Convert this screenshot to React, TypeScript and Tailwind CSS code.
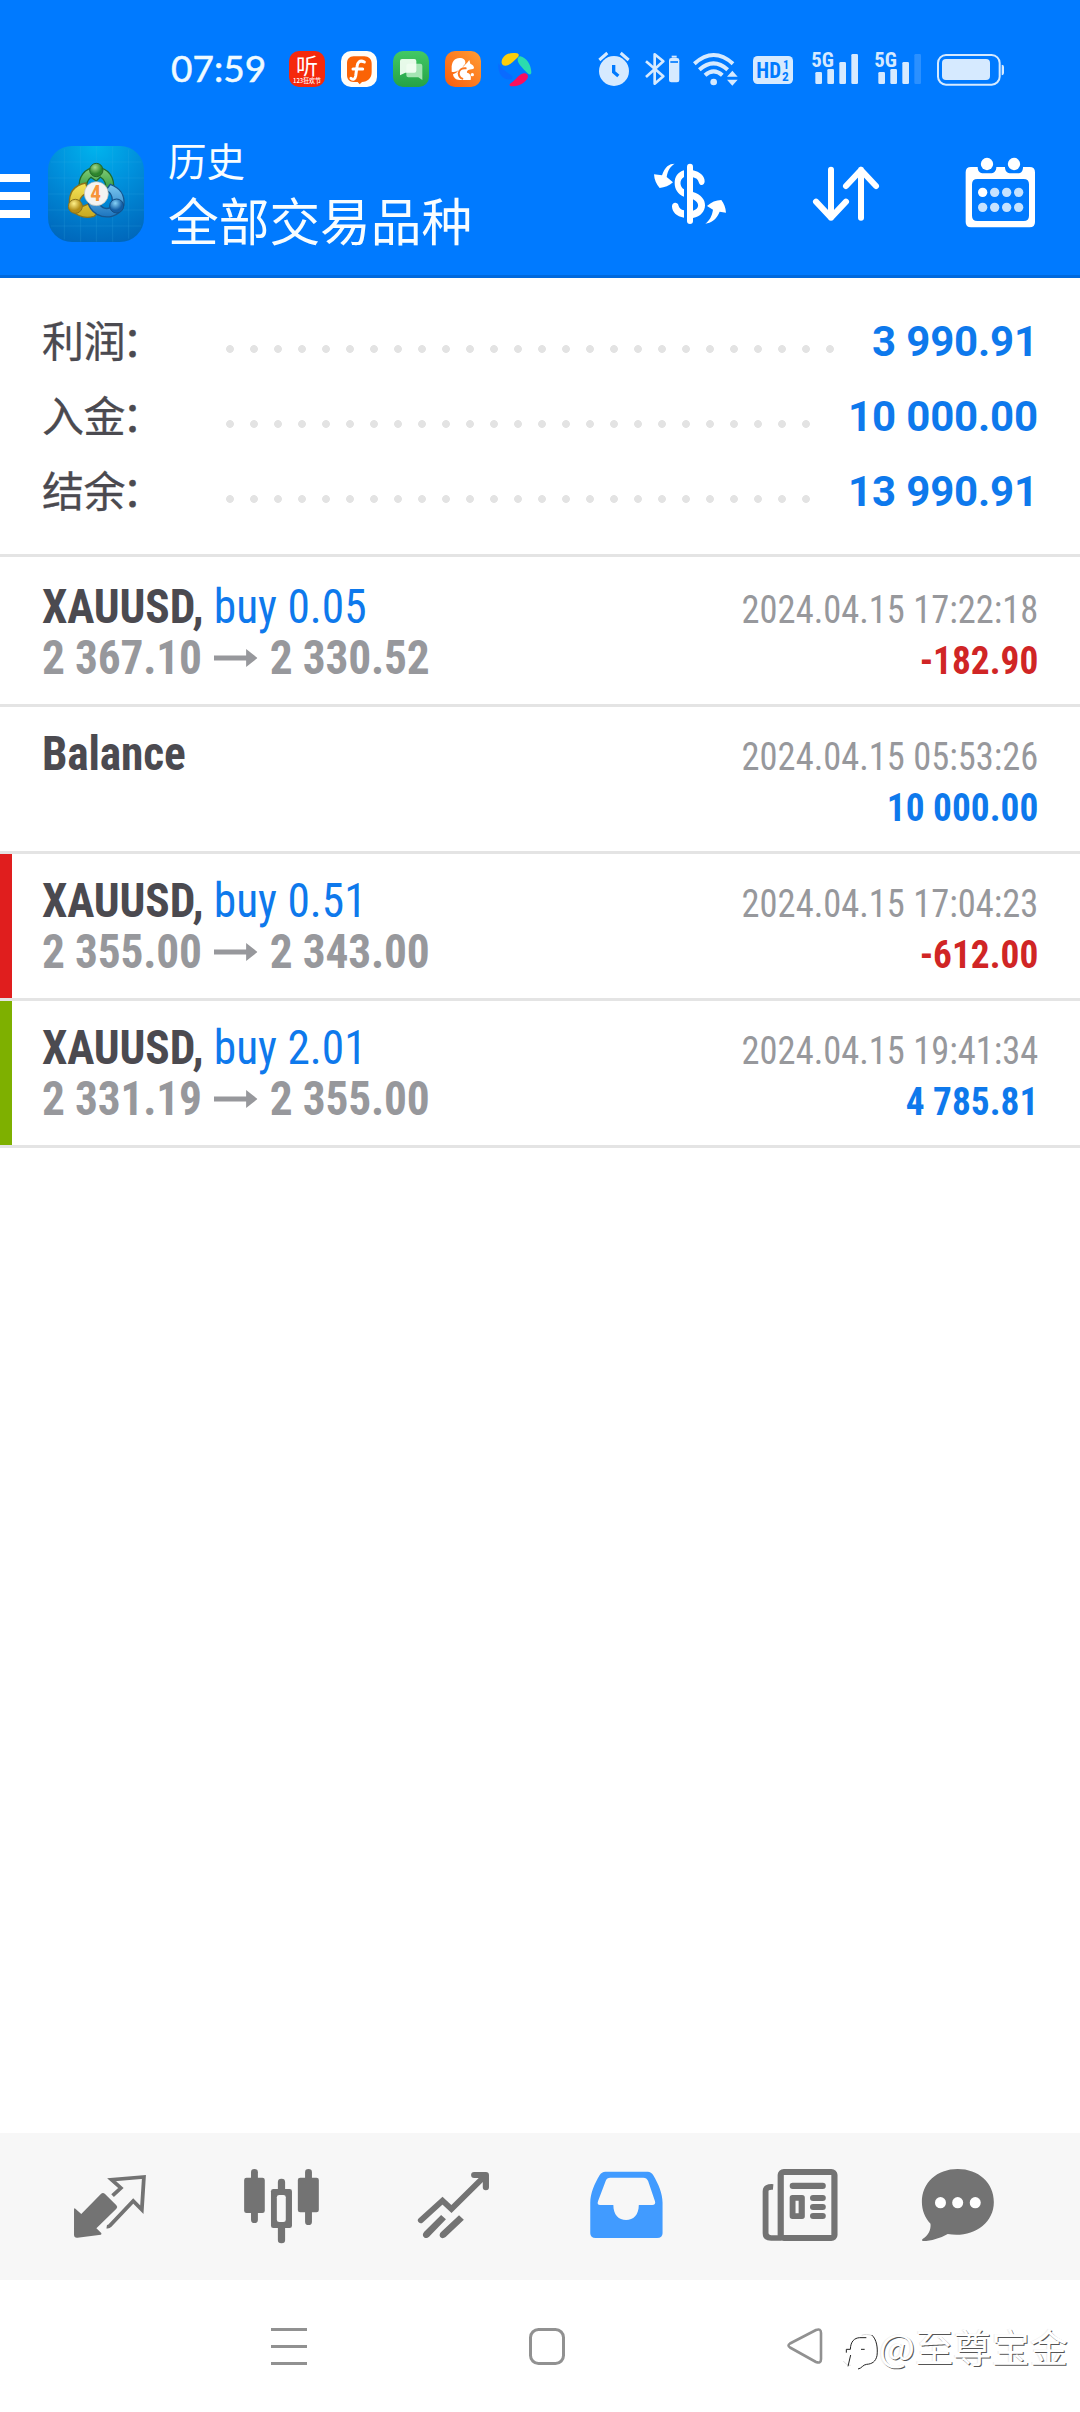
import type { ReactNode } from "react";

const SANS = "font-['Roboto','Noto_Sans_CJK_SC',sans-serif]";
const COND = "font-['Roboto_Condensed','Roboto',sans-serif]";
const CJK = "font-['Noto_Sans_CJK_SC',sans-serif]";

/* ---------- status bar ---------- */

function NotificationIcons() {
  return (
    <div className="ml-[22px] flex gap-4">
      <svg className="size-9" viewBox="0 0 108 108">
        <rect width="108" height="108" rx="30" fill="#f5290c" />
        <text x="54" y="70" fontSize="66" fill="#fff" textAnchor="middle" fontFamily="Noto Sans CJK SC" fontWeight="400">听</text>
        <text x="54" y="96" fontSize="20" fill="#fff" textAnchor="middle" fontFamily="Noto Sans CJK SC" fontWeight="500" textLength="84" lengthAdjust="spacingAndGlyphs">123狂欢节</text>
      </svg>
      <svg className="size-9" viewBox="0 0 108 108">
        <rect width="108" height="108" rx="30" fill="#fffdf8" />
        <path d="M38 16h32c13 0 22 9 22 22v25c0 19-12 29-29 30l-7 7-6-7H38c-13 0-20-9-20-21V38c0-13 7-22 20-22z" fill="#fb6305" />
        <path d="M70 33c-14-7-21 1-22 14l-4 28c-2 11-8 12-14 7M36 54h29" fill="none" stroke="#fff" strokeWidth="9" strokeLinecap="round" />
      </svg>
      <svg className="size-9" viewBox="0 0 108 108">
        <defs>
          <linearGradient id="chat" x2="0" y2="1"><stop stopColor="#42c964" /><stop offset="1" stopColor="#25a247" /></linearGradient>
        </defs>
        <rect width="108" height="108" rx="30" fill="url(#chat)" />
        <path d="M46 38h36q6 0 6 6v43l-12-8H46q-6 0-6-6V44q0-6 6-6z" fill="#a5e5b4" />
        <path d="M27 24h37q6 0 6 6v29q0 6-6 6H37l-16 8V30q0-6 6-6z" fill="#f4fff4" opacity=".93" />
      </svg>
      <svg className="size-9" viewBox="0 0 108 108">
        <defs>
          <linearGradient id="uc" x1="1" x2="0" y2="1"><stop stopColor="#ff9d35" /><stop offset="1" stopColor="#fb5c0c" /></linearGradient>
        </defs>
        <rect width="108" height="108" rx="30" fill="url(#uc)" />
        <path d="M20 53c-1-20 9-32 24-32 11 0 18 6 17 14-1 7-7 8-8 13 4-2 8-8 13-12l7-9 3 11c8 3 12 9 11 14-4 4-10 3-15 4-5 2-7 5-6 9 9 2 14 9 11 22H44c-12 0-19-8-20-17 7-2 14-6 16-12-6 5-13 6-20 4z" fill="#fff" />
        <path d="M62 52c-12-1-20 6-21 15 1 9 5 14 11 16" fill="none" stroke="#fb7620" strokeWidth="6" strokeLinecap="round" />
        <circle cx="82" cy="71" r="5" fill="#fff" />
      </svg>
      <svg className="size-9" viewBox="0 0 108 108">
        <path d="M14 36C12 20 30 1 60 7c7 2 7 8 1 13C48 32 35 45 25 44c-7 0-10-3-11-8z" fill="#fbce0c" />
        <path d="M70 16c18 4 32 24 33 48 0 8-7 8-12 2C80 54 63 40 62 27c0-7 3-11 8-11z" fill="#2bdcae" />
        <path d="M92 81c-7 15-29 26-48 25-8-1-8-6-2-10 15-9 25-28 38-29 10 0 15 6 12 14z" fill="#fb0e5c" />
        <path d="M4 37c-2 30 12 50 37 48 7-3 7-9 2-12C27 63 13 52 4 37z" fill="#0a6bff" />
      </svg>
    </div>
  );
}

function Signal({ weak = false }: { weak?: boolean }) {
  return (
    <svg className="h-9 w-[46px] overflow-visible" viewBox="0 0 138 108" fill="#d6eaff">
      <text x="-2" y="47" fontSize="58" fontFamily="Roboto Condensed" fontWeight="700" textLength="68" lengthAdjust="spacingAndGlyphs">5G</text>
      <rect x="10" y="63" width="20" height="36" rx="4" />
      <rect x="46" y="54" width="20" height="45" rx="4" />
      <rect x="82" y="33" width="20" height="66" rx="4" />
      <rect x="118" y="9" width="20" height="90" rx="4" opacity={weak ? 0.2 : 1} />
    </svg>
  );
}

function StatusBar() {
  return (
    <div className="flex h-[138px] items-start pt-[51px] pl-[171px]">
      <span className="-mt-[2px] w-[96px] font-['Lato',sans-serif] text-[37px] leading-[37px] whitespace-nowrap text-[#effaff] [-webkit-text-stroke:0.5px_#effaff]">07:59</span>
      <NotificationIcons />
      <svg className="ml-[65px] h-9 w-8" viewBox="0 0 96 108">
        <circle cx="48" cy="60" r="45" fill="#d6eaff" />
        <path d="M4 27 28 6M68 6l24 21" stroke="#d6eaff" strokeWidth="9" strokeLinecap="butt" />
        <path d="M47 42v21l14 12" fill="none" stroke="#007aff" strokeWidth="10" />
      </svg>
      <svg className="ml-[14px] h-9 w-[36px]" viewBox="0 0 108 108" fill="none" stroke="#d6eaff" strokeWidth="8">
        <path d="m6 31 52 45-26 22V10l26 21L6 78" strokeLinejoin="round" />
        <rect x="75" y="21" width="31" height="73" rx="7" fill="#d6eaff" stroke="none" />
        <path d="M83 17h15" strokeWidth="6" /><path d="M79 33h23" stroke="#007aff" strokeWidth="5" />
      </svg>
      <svg className="ml-[13px] h-9 w-[45px]" viewBox="0 0 135 108" fill="none" stroke="#d6eaff" strokeWidth="12">
        <path d="M4 38q58-52 116 0M19 56q43-38 85 0M36 73q26-24 52 0" />
        <circle cx="62" cy="93" r="10" fill="#d6eaff" stroke="none" />
        <path d="m118 59 16 18h-32zM118 104l16-18h-32z" fill="#d6eaff" stroke="none" />
      </svg>
      <svg className="ml-[15px] h-9 w-10" viewBox="0 0 120 108">
        <rect y="15" width="120" height="84" rx="14" fill="#d6eaff" />
        <g fill="#007aff" fontFamily="Roboto Condensed" fontWeight="700">
          <text x="10" y="81" fontSize="66" textLength="74" lengthAdjust="spacingAndGlyphs">HD</text>
          <text x="90" y="53" fontSize="36">1</text>
          <text x="87" y="89" fontSize="40">2</text>
        </g>
      </svg>
      <div className="ml-[19px]"><Signal /></div>
      <div className="ml-[17px]"><Signal weak /></div>
      <svg className="ml-[16px] h-9 w-[67px]" viewBox="0 0 201 108">
        <rect x="3" y="12" width="185" height="89" rx="24" fill="none" stroke="#d6eaff" strokeWidth="6" />
        <rect x="15" y="24" width="144" height="63" rx="12" fill="#d6eaff" />
        <path d="M194 41q7 0 7 7v16q0 9-7 9z" fill="#d6eaff" />
      </svg>
    </div>
  );
}

/* ---------- app header ---------- */

function AppLogo() {
  return (
    <svg className="ml-[18px] size-24" viewBox="144 78 288 288">
      <defs>
        <radialGradient id="sky" cx=".5" cy="0" r="1.05">
          <stop stopColor="#00b4ee" /><stop offset=".45" stopColor="#008fdb" /><stop offset="1" stopColor="#0066ba" />
        </radialGradient>
        <linearGradient id="gr" x2="0" y2="1"><stop stopColor="#86cf78" /><stop offset="1" stopColor="#23923a" /></linearGradient>
        <linearGradient id="ye" x2="0" y2="1"><stop stopColor="#f6e558" /><stop offset="1" stopColor="#c9a81f" /></linearGradient>
        <linearGradient id="bl" x2="0" y2="1"><stop stopColor="#7cc8f0" /><stop offset="1" stopColor="#1b74bf" /></linearGradient>
        <radialGradient id="hg" cx=".4" cy=".3"><stop stopColor="#a4db8c" /><stop offset="1" stopColor="#2c852c" /></radialGradient>
        <radialGradient id="hy" cx=".4" cy=".3"><stop stopColor="#fff189" /><stop offset="1" stopColor="#b38d16" /></radialGradient>
        <radialGradient id="hb" cx=".4" cy=".3"><stop stopColor="#86d2f7" /><stop offset="1" stopColor="#125da4" /></radialGradient>
      </defs>
      <rect x="144" y="78" width="288" height="288" rx="72" fill="url(#sky)" />
      <path d="M193 86v272M242 79v286M289 79v286M338 79v286M386 88v268M152 126h272M145 174h287M145 222h287M145 270h287M153 318h270" stroke="#3bb5e8" strokeOpacity=".18" strokeWidth="3" />
      <path d="M238 205c-4-33 15-62 51-63 36 1 57 30 51 69l-25 8c6-23 0-40-14-48l-12 12-16-11c-11 8-15 22-14 37z" fill="url(#gr)" stroke="#1f6b2c" strokeWidth="4" />
      <path d="M257 189c-32 6-51 26-49 65 11 31 41 44 74 35l18-15-34-22-20 8-8-16c4-14 13-22 27-26z" fill="url(#ye)" stroke="#8b731a" strokeWidth="4" />
      <path d="M331 193c26 9 44 30 41 62-13 35-51 44-81 28-17-10-25-24-27-38l31 2c10 18 21 22 36 16l6-22c0-15-8-25-19-31z" fill="url(#bl)" stroke="#175790" strokeWidth="4" />
      <circle cx="289" cy="150" r="20" fill="url(#hg)" stroke="#27642a" strokeWidth="3" />
      <circle cx="226" cy="259" r="21" fill="url(#hy)" stroke="#8b731a" strokeWidth="3" />
      <circle cx="350" cy="258" r="21" fill="url(#hb)" stroke="#134f87" strokeWidth="3" />
      <circle cx="289" cy="221" r="36" fill="#f4f3f1" stroke="#b9bcb4" strokeWidth="2" />
      <text x="287" y="243" fontSize="64" fontFamily="Roboto Condensed" fontWeight="700" textAnchor="middle" fill="#f7943a">4</text>
    </svg>
  );
}

function Header() {
  return (
    <header className="h-[278px] border-b-[3px] border-[#0069dd] bg-[#007aff] text-[#f8fdff]">
      <StatusBar />
      <div className="flex h-[112px] items-center">
        <div className="flex w-[30px] flex-col gap-[10px] pt-1">
          <i className="h-2 bg-white" />
          <i className="h-2 bg-white" />
          <i className="h-2 bg-white" />
        </div>
        <AppLogo />
        <div className={`ml-[24px] w-[381px] pb-1 whitespace-nowrap ${CJK}`}>
          <div className="text-[38.500px] leading-[54px]">历史</div>
          <div className="text-[50.700px] leading-[66px]">全部交易品种</div>
        </div>
        <svg className="ml-[101px] h-[84px] w-20" viewBox="90 66 240 252" fill="#fff">
          <path d="M164 101c-16 0-30 9-38 35l-24-3c1 16 7 31 17 41 15-1 29-7 40-17l-19-16c3-20 12-33 24-40z" />
          <path d="M256 281c17-2 33-12 43-36l19 3c-1-15-6-28-14-38-16 0-30 6-43 18l18 11c-3 19-10 32-23 42z" />
          <rect x="201" y="101" width="18" height="181" rx="9" />
          <path d="M192 121c-19 6-28 19-28 38s10 34 28 41v-22c-13-8-15-28 0-37zM219 121c20 4 35 17 35 33 0 13-15 16-18 2-2-8-8-12-17-14zM219 186c24 8 36 22 36 40s-13 34-36 38v-22c19-5 22-23 0-34zM192 263c-22-3-36-17-36-34 0-14 18-14 20-1 2 7 7 11 16 13z" />
        </svg>
        <svg className="ml-[76px] h-[84px] w-20" viewBox="558 66 240 252" fill="none" stroke="#fff" strokeWidth="18" strokeLinecap="round" strokeLinejoin="round">
          <path d="M633 119v144M588 215l45 48 45-48M723 263V119M678 168l45-48 45 48" />
        </svg>
        <svg className="ml-[74px] h-[84px] w-20" viewBox="1020 66 240 252" fill="#fff">
          <path fillRule="evenodd" d="M1053 111h20c0 13 7 19 18 19h20c11 0 18-7 18-19h26c0 13 7 19 18 19h20c11 0 16-7 16-19h20q16 0 16 16v149q0 16-16 16h-176q-16 0-16-16V127q0-16 16-16zM1072 147q-16 0-16 16v94q0 16 16 16h139q16 0 16-16v-94q0-16-16-16z" />
          <circle cx="1101" cy="102" r="18.500" /><circle cx="1182" cy="102" r="18.500" />
          <circle cx="1088" cy="187" r="14" />
          <g fill="#c5e2ff">
            <circle cx="1124" cy="187" r="14" /><circle cx="1160" cy="187" r="14" /><circle cx="1196" cy="187" r="14" />
            <circle cx="1088" cy="232" r="14" /><circle cx="1124" cy="232" r="14" /><circle cx="1160" cy="232" r="14" /><circle cx="1196" cy="232" r="14" />
          </g>
        </svg>
      </div>
    </header>
  );
}

/* ---------- summary ---------- */

function SummaryRow({ label, value, long = false }: { label: string; value: string; long?: boolean }) {
  return (
    <div className="flex h-[75px] items-start">
      <span className={`-mt-[3px] w-[176px] text-[42px] leading-[75px] tracking-[-0.5px] whitespace-nowrap text-[#4b4a50] [-webkit-text-stroke:0.3px_#4b4a50] ${CJK}`}>
        {label}
        <span className="-ml-[3px]">：</span>
      </span>
      <i className={`mt-[41px] h-2 bg-[radial-gradient(circle,#e3e3e3_3.5px,transparent_4.3px)] bg-[length:24px_8px] ${long ? "w-[624px]" : "w-[600px]"}`} />
      <span className="ml-auto text-[42px] leading-[75px] font-bold tracking-[-0.15px] whitespace-nowrap text-[#0e79ec]">{value}</span>
    </div>
  );
}

/* ---------- history rows ---------- */

type Deal = {
  symbol: string;
  action?: string;
  from?: string;
  to?: string;
  time: string;
  amount: string;
  loss?: boolean;
  mark?: "red" | "green";
};

const deals: Deal[] = [
  { symbol: "XAUUSD,", action: "buy 0.05", from: "2 367.10", to: "2 330.52", time: "2024.04.15 17:22:18", amount: "-182.90", loss: true },
  { symbol: "Balance", time: "2024.04.15 05:53:26", amount: "10 000.00" },
  { symbol: "XAUUSD,", action: "buy 0.51", from: "2 355.00", to: "2 343.00", time: "2024.04.15 17:04:23", amount: "-612.00", loss: true, mark: "red" },
  { symbol: "XAUUSD,", action: "buy 2.01", from: "2 331.19", to: "2 355.00", time: "2024.04.15 19:41:34", amount: "4 785.81", mark: "green" },
];

function DealRow({ deal }: { deal: Deal }) {
  const edge = deal.mark === "red" ? "bg-[#e01e1e]" : deal.mark === "green" ? "bg-[#7eb000]" : "bg-transparent";
  return (
    <div className={`flex h-[147px] border-b-[3px] border-[#e4e4e4] pr-[42px] whitespace-nowrap ${COND}`}>
      <i className={`w-3 ${edge}`} />
      <div className="ml-[30px] origin-left scale-x-[.945] pt-[21px] text-[48px] leading-[51px]">
        <div>
          <span className="font-bold tracking-[-0.15px] text-[#4b4a50]">{deal.symbol}</span>
          {deal.action && <span className="text-[#0e79ec]"> {deal.action}</span>}
        </div>
        {deal.from && (
          <div className="flex items-center font-bold tracking-[-0.2px] text-[#97989c]">
            <span>{deal.from}</span>
            <svg className="mx-[13px] h-[18px] w-[46px]" viewBox="0 0 46 18" fill="currentColor">
              <path d="M0 6.500h34V0l12 9-12 9v-6.500H0z" />
            </svg>
            <span>{deal.to}</span>
          </div>
        )}
      </div>
      <div className="ml-auto pt-[25px] text-right text-[39px] leading-[51px]">
        <div className="origin-right scale-x-[.935] text-[#97989c]">{deal.time}</div>
        <div className={`origin-right scale-x-[.957] font-bold ${deal.loss ? "text-[#d02525]" : "text-[#0e79ec]"}`}>{deal.amount}</div>
      </div>
    </div>
  );
}

/* ---------- bottom tabs ---------- */

function TabIcon({ box, className = "", children }: { box: string; className?: string; children: ReactNode }) {
  return (
    <svg className={`h-[84px] w-[84px] ${className}`} viewBox={box} preserveAspectRatio="none" fill="#737373">
      {children}
    </svg>
  );
}

function TabBar() {
  return (
    <nav className="flex h-[147px] gap-[88px] bg-[#f7f7f7] pt-[31px] pl-[68px]">
      <TabIcon box="197.5 132 244 252">
        <path d="M215 266q2-2 4 0l17 16 57-60q6-6 12 0l33 34q5 5 0 10l-58 59 14 14q2 3-1 5l-68 9q-10 1-10-9z" />
        <path d="m327 227 24-23-27-25 94-8-6 98-25-26-68 74q-3 4-9 3" fill="none" stroke="#737373" strokeWidth="11" />
      </TabIcon>
      <TabIcon box="697 132 244 252">
        <rect x="729" y="147" width="20" height="162" rx="10" />
        <rect x="709" y="173" width="60" height="106" rx="7" />
        <rect x="886" y="147" width="20" height="168" rx="10" />
        <rect x="865" y="173" width="61" height="104" rx="7" />
        <rect x="807" y="176" width="21" height="60" rx="10" />
        <rect x="807" y="300" width="21" height="70" rx="10" />
        <rect x="787" y="207" width="61" height="117" rx="7" />
        <rect x="804" y="225" width="26" height="81" rx="7" fill="#f7f7f7" />
      </TabIcon>
      <TabIcon box="1196.400 132 244 252">
        <path d="m1222 301 63-59 26 25 97-99" fill="none" stroke="#737373" strokeWidth="17" strokeLinecap="round" />
        <path d="M1377 165h34v37" fill="none" stroke="#737373" strokeWidth="18" strokeLinecap="round" strokeLinejoin="round" />
        <path d="m1281 285 14 13-49 52c-11 11-25-3-14-15zM1333 286l14 13-53 52c-12 10-24-4-13-15z" />
      </TabIcon>
      <TabIcon box="127.800 132 244 252">
        <path fillRule="evenodd" fill="#419bff" d="M190 155h123q10 0 16 11c15 26 27 55 27 82v92q0 14-16 14H162q-16 0-16-14v-92c0-27 12-56 27-82q6-11 17-11zM204 173q-10 0-13 9l-22 60q-5 13 6 13h38c0 30 16 45 37 45s37-15 37-45h39q11 0 8-11l-20-61q-4-10-14-10z" />
      </TabIcon>
      <TabIcon box="633 132 244 252" className="ml-[2px]">
        <g fill="none" stroke="#737373" strokeWidth="18">
          <rect x="699" y="156" width="156" height="198" rx="9" />
          <path d="M677 201q-22-2-22 13v126q0 14 16 14h30" strokeWidth="17" />
        </g>
        <rect x="725" y="188" width="105" height="19" rx="9" />
        <path fillRule="evenodd" d="M733 225h28q8 0 8 8v56q0 8-8 8h-28q-8 0-8-8v-56q0-8 8-8zM742 242v38h9v-38z" />
        <rect x="784" y="225" width="46" height="18" rx="9" /><rect x="784" y="252" width="46" height="18" rx="9" /><rect x="784" y="279" width="46" height="18" rx="9" />
      </TabIcon>
      <TabIcon box="1091.900 132 244 252" className="-ml-[14px]">
        <path d="M1213 147c60 0 105 41 105 99 0 69-67 109-134 96-22 13-48 21-71 21q-7-2-1-7c15-10 24-26 22-45-16-17-25-40-25-65 0-58 44-99 104-99z" />
        <g fill="#fff"><ellipse cx="1163" cy="248" rx="16" ry="17" /><ellipse cx="1213" cy="248" rx="16" ry="17" /><ellipse cx="1264" cy="248" rx="16" ry="17" /></g>
      </TabIcon>
    </nav>
  );
}

function SystemNav() {
  return (
    <div className="flex h-[132px] items-start pt-12 pl-[271px]">
      <svg className="h-[37px] w-9" viewBox="0 0 36 37" stroke="#919191" strokeWidth="3">
        <path d="M0 1.500h36M0 18.500h36M0 35.500h36" />
      </svg>
      <svg className="ml-[222px] h-[37px] w-9" viewBox="0 0 36 37" fill="none" stroke="#919191" strokeWidth="3">
        <rect x="1.500" y="1.500" width="33" height="34" rx="8" />
      </svg>
      <svg className="ml-[222px] h-[37px] w-9" viewBox="0 0 36 37" fill="none" stroke="#919191" strokeWidth="2.600" strokeLinejoin="round">
        <path d="M29 2 3 15.500q-3 2 0 4L29 34q5 2 5-3V5q0-5-5-3z" />
      </svg>
      <div className="ml-[18px] flex items-start">
        <svg className="mt-[3px] h-[48px] w-[38px]" viewBox="0 0 114 144" fill="none" strokeWidth="3">
          <path d="M29 103c-10 0-17-6-22-13M92 13c-10-3-22-4-30 0" stroke="#ddd" />
          <path d="M16 65v-10h12c1-24 12-34 28-35h20M92 12c15 12 19 40 16 62-4 18-15 25-31 26-12 1-14 12-26 14M29 72l-8 34M60 55h11" stroke="#222" />
        </svg>
        <span className={`-mt-[2px] text-[38.200px] leading-[40px] whitespace-nowrap text-white [text-shadow:1px_1px_0_#555,-1px_0_0_#eee] ${CJK}`}>@至尊宝金</span>
      </div>
    </div>
  );
}

export default function App() {
  return (
    <div className={`flex h-[2412px] w-[1080px] flex-col overflow-hidden bg-white ${SANS}`}>
      <Header />
      <section className="h-[279px] border-b-[3px] border-[#e4e4e4] pt-[26px] pr-[42px] pl-[42px]">
        <SummaryRow label="利润" value="3 990.91" long />
        <SummaryRow label="入金" value="10 000.00" />
        <SummaryRow label="结余" value="13 990.91" />
      </section>
      <main className="flex-1 pt-[3px]">
        {deals.map((deal) => (
          <DealRow key={deal.time} deal={deal} />
        ))}
      </main>
      <TabBar />
      <SystemNav />
    </div>
  );
}
